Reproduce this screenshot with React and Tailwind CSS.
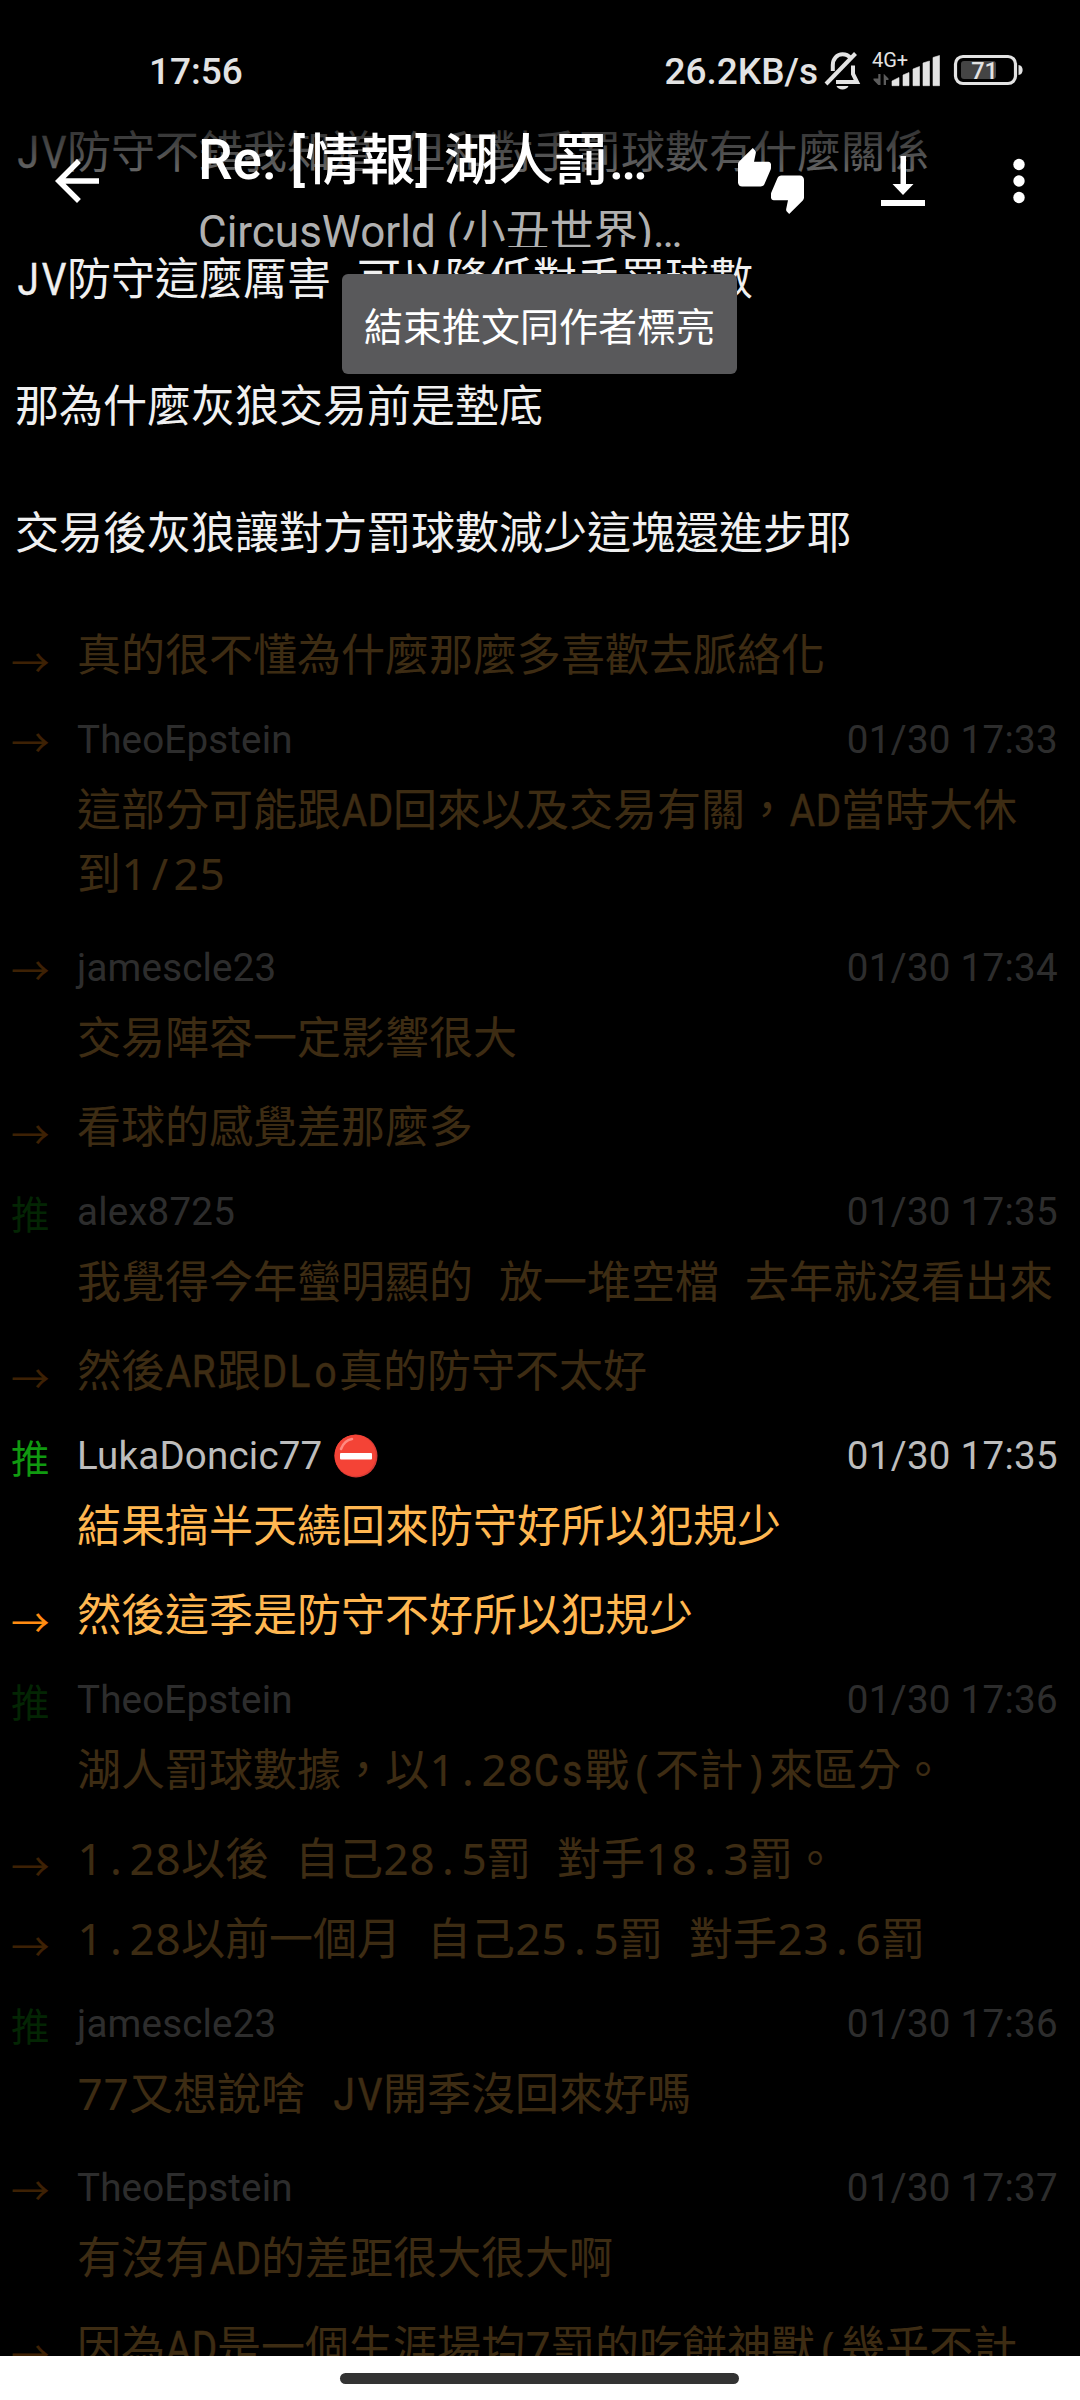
import { Fragment } from 'react';

const article = [
  'JV防守不錯我知道 但和對手罰球數有什麼關係',
  'JV防守這麼厲害 可以降低對手罰球數',
  '那為什麼灰狼交易前是墊底',
  '交易後灰狼讓對方罰球數減少這塊還進步耶',
];

const comments = [
  { type: '→', lines: ['真的很不懂為什麼那麼多喜歡去脈絡化'] },
  { type: '→', user: 'TheoEpstein', time: '01/30 17:33', lines: ['這部分可能跟AD回來以及交易有關，AD當時大休', '到1/25'] },
  { type: '→', user: 'jamescle23', time: '01/30 17:34', lines: ['交易陣容一定影響很大'] },
  { type: '→', lines: ['看球的感覺差那麼多'] },
  { type: '推', user: 'alex8725', time: '01/30 17:35', lines: ['我覺得今年蠻明顯的 放一堆空檔 去年就沒看出來'] },
  { type: '→', lines: ['然後AR跟DLo真的防守不太好'] },
  { type: '推', user: 'LukaDoncic77', time: '01/30 17:35', blocked: true, active: true, lines: ['結果搞半天繞回來防守好所以犯規少'] },
  { type: '→', active: true, lines: ['然後這季是防守不好所以犯規少'] },
  { type: '推', user: 'TheoEpstein', time: '01/30 17:36', lines: ['湖人罰球數據，以1.28Cs戰(不計)來區分。'] },
  { type: '→', lines: ['1.28以後 自己28.5罰 對手18.3罰。'] },
  { type: '→', lines: ['1.28以前一個月 自己25.5罰 對手23.6罰'] },
  { type: '推', user: 'jamescle23', time: '01/30 17:36', lines: ['77又想說啥 JV開季沒回來好嗎'] },
  { type: '→', user: 'TheoEpstein', time: '01/30 17:37', lines: ['有沒有AD的差距很大很大啊'] },
  { type: '→', lines: ['因為AD是一個生涯場均7罰的吃餅神獸(幾乎不計'] },
];

// half-width characters all take the same cell
const MonoText = ({ text }) => (
  <>
    {text.split(/([\x20-\x7e])/).filter(Boolean).map((part, i) => {
      if (!/^[\x20-\x7e]$/.test(part)) return <Fragment key={i}>{part}</Fragment>;
      if (/[A-Za-z]/.test(part)) {
        return (
          <span key={i} className="inline-flex w-[26px] justify-center whitespace-pre font-[Roboto] leading-none">
            <span className="scale-x-[0.88] [-webkit-text-stroke:0.4px]">{part}</span>
          </span>
        );
      }
      return (
        <span key={i} className="inline-flex w-[26px] justify-center whitespace-pre font-['Noto_Sans'] leading-none">
          {part}
        </span>
      );
    })}
  </>
);

const NoEntry = () => (
  <svg viewBox="0 0 44 44" className="ml-[12px] h-[44px] w-[44px]">
    <circle cx="22" cy="22" r="21.5" fill="#d83a34" />
    <circle cx="21.2" cy="21.4" r="20.7" fill="#f44336" />
    <path d="M7 15C9 9.500 13 6 18 5" stroke="#ff8a80" strokeWidth="2.600" strokeLinecap="round" fill="none" />
    <rect x="6" y="19" width="32" height="6.500" rx="1" fill="#fff" />
  </svg>
);

const Comment = ({ type, user, time, blocked, active, lines }) => (
  <div className={`flex items-start pl-[11px] ${active ? '' : 'opacity-[0.24]'}`}>
    <div className={`w-[66px] pt-[21px] text-[38.5px] leading-[56px] ${type === '推' ? 'text-[#109a10]' : 'text-[#ff8c12]'}`}>
      {type}
    </div>
    <div className="flex-1">
      {user && (
        <div className="flex h-[84px] items-start justify-between pr-[22px] pt-[26px] font-[Roboto] text-[38.5px] leading-[45px] tracking-[0.2px] text-[#bdbdbd]">
          <span className="flex items-center">
            {user}
            {blocked && <NoEntry />}
          </span>
          <span className="tracking-[0.3px]">{time}</span>
        </div>
      )}
      <div className={`whitespace-nowrap text-[44px] leading-[64px] text-[#ffb751] ${user ? 'pb-[16px]' : 'pb-[7px] pt-[9px]'}`}>
        {lines.map((line) => (
          <p key={line} className="h-[64px]"><MonoText text={line} /></p>
        ))}
      </div>
    </div>
  </div>
);

const StatusBar = () => (
  <div className="flex h-[88px] items-start justify-between bg-black pl-[149px] pr-[56px] pt-[49px] font-[Roboto] text-[37px] font-medium leading-[44px] text-[#e3e3e3]">
    <span className="pt-px">17:56</span>
    <div className="flex">
      <span className="mr-[6px] pt-px">26.2KB/s</span>
      <svg viewBox="0 0 200 44" className="h-[44px] w-[200px]" fill="none">
        <path d="M8.800 22V16C8.800 10 13 5.300 18.500 5.300C22 5.300 24.500 6.500 26.500 9" stroke="#e3e3e3" strokeWidth="4" />
        <path d="M2 35L31.500 4.500" stroke="#e3e3e3" strokeWidth="4" />
        <path d="M29 16.500V25L33 33H12" stroke="#e3e3e3" strokeWidth="4" />
        <path d="M12.500 37H24.500C23 41.500 14 41.500 12.500 37Z" fill="#e3e3e3" />
        <text x="48" y="18.3" fill="#e3e3e3" fontSize="20" fontWeight="400" textLength="36">4G+</text>
        <path d="M54.300 25H56.500V36H54.300L49.500 31V29.500H54.300ZM59.700 36H62V31H64.500V29.500L60 25H59.700Z" fill="#5c5c5c" />
        <path d="M68 36.700V32L75 28.500V36.700ZM79 36.700V26L85 23.500V36.700ZM89 36.700V20L95.500 17.500V36.700ZM99 36.700V14L105.500 12V36.700ZM109 36.700V8.500L115.500 6.500V36.700Z" fill="#e3e3e3" stroke="#e3e3e3" strokeWidth="0.6" strokeLinejoin="round" />
        <rect x="131.500" y="7.500" width="60" height="27" rx="7.500" stroke="#e3e3e3" strokeWidth="3.200" />
        <rect x="137" y="12" width="35" height="18" rx="3" fill="#444" />
        <path d="M194.500 16C200 16 200 26 194.500 26Z" fill="#e3e3e3" />
        <text x="160.500" y="29.500" textAnchor="middle" fill="#e3e3e3" fontSize="23.5" fontWeight="500" stroke="none">71</text>
      </svg>
    </div>
  </div>
);

const Toolbar = () => (
  <div className="flex h-[159px] items-start bg-linear-to-b from-black to-black/20">
    <svg viewBox="0 0 24 24" className="ml-[44px] mt-[60px] h-[66px] w-[66px] shrink-0" fill="#fff">
      <path d="M20 11H7.830l5.590-5.590L12 4l-8 8 8 8 1.410-1.410L7.830 13H20v-2z" />
    </svg>
    <div className="ml-[88px] h-[159px] w-[501px] overflow-hidden whitespace-nowrap pt-[39px] font-[Roboto,'Noto_Sans_CJK_TC',sans-serif]">
      <h1 className="h-[73px] text-[55px] font-medium leading-[66px] text-white">Re: [情報] 湖人罰…</h1>
      <p className="text-[44px] leading-[64px] text-[#b0b0b0]">CircusWorld (小丑世界)…</p>
    </div>
    <svg viewBox="0 0 24 24" className="ml-[39px] mt-[60px] h-[66px] w-[66px] shrink-0" fill="#fff">
      <path d="M12 6c0-.55-.45-1-1-1H5.820l.66-3.180.02-.23c0-.31-.13-.59-.33-.8L5.380 0 .44 4.940C.17 5.210 0 5.590 0 6v6.500c0 .83.67 1.500 1.500 1.500h6.750c.62 0 1.150-.38 1.380-.91l2.260-5.290c.07-.17.11-.36.11-.55V6zm10.500 4h-6.750c-.62 0-1.150.38-1.380.91l-2.260 5.290c-.07.17-.11.36-.11.55V18c0 .55.45 1 1 1h5.180l-.66 3.180-.02.24c0 .31.13.59.33.8l.79.78 4.940-4.940c.27-.27.44-.65.44-1.060v-6.500c0-.83-.67-1.500-1.500-1.500z" />
    </svg>
    <svg viewBox="0 0 44 52" className="ml-[77px] mt-[67px] h-[52px] w-[44px] shrink-0" fill="#fff">
      <path d="M19.500 1h5.500v28h7.500L22 40 11.500 29h8zM0 45h44v6H0z" />
    </svg>
    <svg viewBox="0 0 12 48" className="ml-[88px] mt-[69px] h-[48px] w-[12px] shrink-0" fill="#fff">
      <circle cx="6" cy="7.500" r="5.700" />
      <circle cx="6" cy="24" r="5.700" />
      <circle cx="6" cy="40.500" r="5.700" />
    </svg>
  </div>
);

const App = () => {
  return (
    <div className="relative flex h-[2400px] w-[1080px] flex-col overflow-hidden bg-black font-['Noto_Sans_CJK_TC',sans-serif]">
      <main className="h-[2356px] shrink-0 overflow-hidden pt-[117px]">
        <article className="mb-[49px] flex flex-col gap-[63px] whitespace-nowrap pl-[15px] text-[44px] leading-[64px] text-[#f0f0f0]">
          {article.map((line) => (
            <p key={line} className="h-[64px]"><MonoText text={line} /></p>
          ))}
        </article>
        {comments.map((comment, i) => (
          <Comment key={i} {...comment} />
        ))}
      </main>

      <footer className="flex flex-1 items-start justify-center bg-white pr-px pt-[17px]">
        <div className="h-[11px] w-[399px] rounded-full bg-[#333]" />
      </footer>

      <header className="absolute inset-x-0 top-0">
        <StatusBar />
        <Toolbar />
      </header>

      <div className="absolute left-[342px] top-[274px] flex h-[100px] w-[395px] items-center justify-center rounded-[6px] bg-[#59595b] text-[39px] leading-[56px] text-white">
        結束推文同作者標亮
      </div>
    </div>
  );
};

export default App;
